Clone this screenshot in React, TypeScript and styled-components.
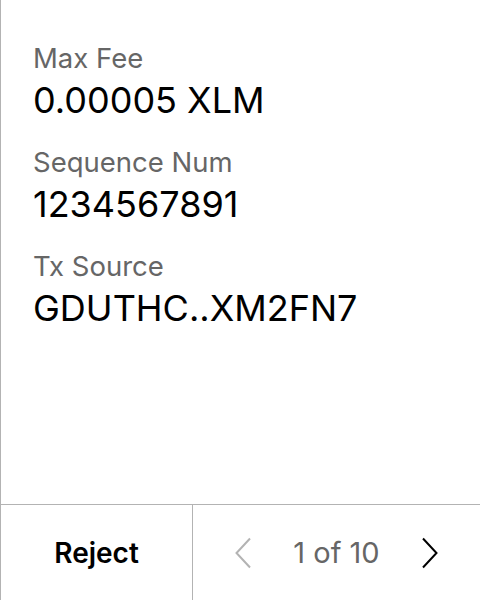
import React from "react";
import styled, { createGlobalStyle } from "styled-components";

const Global = createGlobalStyle`
  html, body { margin: 0; padding: 0; background: #fff; }
  body { font-family: Inter, "Noto Sans", sans-serif; }
`;

const Screen = styled.div`
  width: 480px;
  height: 600px;
  box-sizing: border-box;
  border-left: 1px solid #b3b3b3;
  display: flex;
  flex-direction: column;
`;

const Content = styled.div`
  flex: 1;
  padding: 41px 0 0 32px;
  display: flex;
  flex-direction: column;
  gap: 23px;
`;

const Field = styled.div`
  display: flex;
  flex-direction: column;
  gap: 3px;
`;

const Label = styled.div`
  font-size: 27.5px;
  line-height: 34px;
  color: #666;
`;

const Value = styled.div`
  font-size: 36px;
  line-height: 44px;
  color: #000;
`;

const Footer = styled.div`
  height: 95px;
  border-top: 1px solid #b3b3b3;
  display: flex;
`;

const RejectButton = styled.div`
  width: 191px;
  border-right: 1px solid #b3b3b3;
  display: flex;
  align-items: center;
  justify-content: center;
  font-size: 28px;
  font-weight: 600;
  color: #000;
`;

const Pager = styled.div`
  flex: 1;
  display: flex;
  align-items: center;
  justify-content: center;
  gap: 41px;
`;

const PageText = styled.div`
  font-size: 29px;
  color: #666;
`;

const Chevron = ({ dir, color }: { dir: "left" | "right"; color: string }) => (
  <svg width="18" height="32" viewBox="0 0 18 32" fill="none">
    <path
      d={dir === "left" ? "M16 1.5 L2.5 16 L16 30.5" : "M2 1.5 L15.5 16 L2 30.5"}
      stroke={color}
      strokeWidth="2"
      strokeLinecap="butt"
      strokeLinejoin="miter"
    />
  </svg>
);

export default function App() {
  const fields = [
    { label: "Max Fee", value: "0.00005 XLM" },
    { label: "Sequence Num", value: "1234567891" },
    { label: "Tx Source", value: "GDUTHC..XM2FN7" },
  ];
  return (
    <Screen>
      <Global />
      <Content>
        {fields.map((f) => (
          <Field key={f.label}>
            <Label>{f.label}</Label>
            <Value>{f.value}</Value>
          </Field>
        ))}
      </Content>
      <Footer>
        <RejectButton>Reject</RejectButton>
        <Pager>
          <Chevron dir="left" color="#b3b3b3" />
          <PageText>1 of 10</PageText>
          <Chevron dir="right" color="#000" />
        </Pager>
      </Footer>
    </Screen>
  );
}
